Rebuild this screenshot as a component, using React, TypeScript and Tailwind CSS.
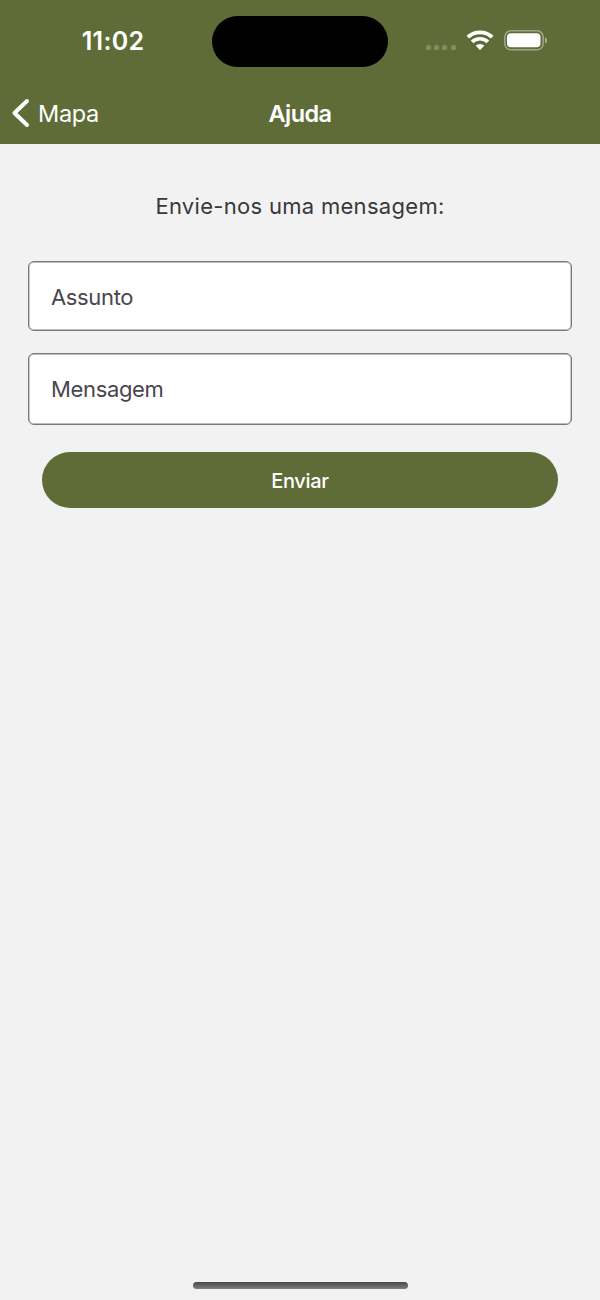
import React from 'react';

const fields = [
  { id: 'subject', label: 'Assunto', box: 'h-[70px] pt-0.5' },
  { id: 'message', label: 'Mensagem', box: 'mt-[22px] h-[71.5px] pt-px' },
];

const StatusBar = () => {
  return (
    <div className="flex h-[83px] items-start text-white">
      <div className="w-[212px] pt-[23px] pl-[14px] text-center text-[25px] leading-9 font-semibold tracking-[0.3px]">
        11:02
      </div>
      <div className="mt-[15.5px] h-[51.5px] w-[176px] rounded-full bg-black"></div>
      <div className="flex h-[81px] items-center pl-[38px]">
        <div className="mt-[14px] flex gap-[3.2px]">
          <span className="size-[5px] rounded-[1.5px] bg-white/22"></span>
          <span className="size-[5px] rounded-[1.5px] bg-white/22"></span>
          <span className="size-[5px] rounded-[1.5px] bg-white/22"></span>
          <span className="size-[5px] rounded-[1.5px] bg-white/22"></span>
        </div>
        <svg className="ml-[10.4px]" width="28" height="21" viewBox="0 0 28 21" fill="none">
          <path d="M1.8 7.2 A17.8 17.8 0 0 1 26.2 7.2" stroke="white" strokeWidth="3.8" />
          <path d="M6.1 11.9 A11.5 11.5 0 0 1 21.9 11.9" stroke="white" strokeWidth="3.7" />
          <path d="M9.6 15.6 Q14 12.2 18.4 15.6 L14.6 19.6 Q14 20.2 13.4 19.6 Z" fill="white" />
        </svg>
        <svg className="ml-[10px]" width="44" height="21" viewBox="0 0 44 21" fill="none">
          <rect x="0.8" y="0.8" width="38.4" height="19" rx="6.2" stroke="white" strokeOpacity="0.4" strokeWidth="1.5" />
          <rect x="3" y="3.3" width="33.5" height="14" rx="4" fill="white" />
          <path d="M41 7.2 C43.8 8 43.8 12.8 41 13.6 Z" fill="white" fillOpacity="0.45" />
        </svg>
      </div>
    </div>
  );
};

const App = () => {
  return (
    <div className="flex h-[1300px] w-[600px] flex-col bg-[#f2f2f2] font-['Inter','Liberation_Sans',sans-serif]">
      <header className="h-36 bg-[#5f6c37]">
        <StatusBar />
        <nav className="grid h-[61px] grid-cols-3 items-center text-white">
          <button className="flex items-center pl-[11px]">
            <svg className="-mt-0.5" width="19" height="30" viewBox="0 0 19 30" fill="none">
              <path d="M16 3 L3.5 15 L16 27" stroke="white" strokeWidth="4" strokeLinecap="round" strokeLinejoin="round" />
            </svg>
            <span className="ml-2 text-[23.5px] leading-8 tracking-[-0.35px]">Mapa</span>
          </button>
          <h1 className="text-center text-[23.5px] leading-8 font-semibold tracking-[-0.6px]">Ajuda</h1>
        </nav>
      </header>

      <main className="px-7">
        <p className="pt-[46px] text-center text-[22px] leading-8 tracking-[0.3px] text-[#38383b]">
          Envie-nos uma mensagem:
        </p>
        <div className="mt-[39px]">
          {fields.map((field) => (
            <div
              key={field.id}
              className={`flex items-center rounded-[6px] border border-[#7b7880] bg-white pl-[22px] text-[22px] tracking-[-0.35px] text-[#49454f] shadow-[inset_0_0_0_0.4px_#7b7880] ${field.box}`}
            >
              {field.label}
            </div>
          ))}
        </div>
        <div className="px-3.5">
          <button className="mt-[27.75px] h-14 w-full rounded-full bg-[#5f6c37] pt-px text-[20px] font-medium tracking-[-0.3px] text-white">
            Enviar
          </button>
        </div>
      </main>

      <div className="mx-auto mt-auto mb-[11.5px] h-[7px] w-[215px] rounded-full bg-linear-to-b from-[#4a4a4a] to-[#808080]"></div>
    </div>
  );
};

export default App;
